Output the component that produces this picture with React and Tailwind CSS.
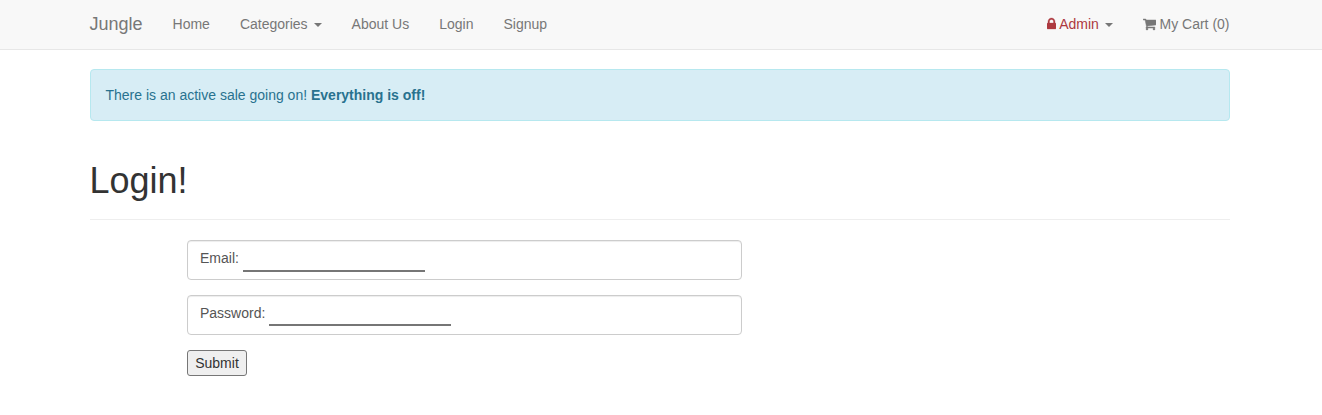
import React from "react";

function Caret() {
  return (
    <span className="ml-[6px] inline-block h-0 w-0 border-x-4 border-t-4 border-x-transparent border-t-[#777] align-middle" />
  );
}

function LockIcon() {
  return (
    <svg className="mt-[3px] h-[14px] w-[9px]" viewBox="0 -1536 1152 1792" fill="currentColor" stroke="currentColor" strokeWidth="40">
      <path
        transform="scale(1 -1)"
        d="M320 768h512v192q0 106-75 181t-181 75-181-75-75-181v-192zm832-96v-576q0-40-28-68t-68-28h-960q-40 0-68 28t-28 68v576q0 40 28 68t68 28h32v192q0 184 132 316t316 132 316-132 132-316v-192h32q40 0 68-28t28-68z"
      />
    </svg>
  );
}

function CartIcon() {
  return (
    <svg className="mt-[3px] h-[14px] w-[13px]" viewBox="0 -1536 1664 1792" fill="currentColor" stroke="currentColor" strokeWidth="60">
      <path
        transform="scale(1 -1)"
        d="M640 0q0-52-38-90t-90-38-90 38-38 90 38 90 90 38 90-38 38-90zm896 0q0-52-38-90t-90-38-90 38-38 90 38 90 90 38 90-38 38-90zm128 1088v-512q0-24-16.5-42.5t-40.5-21.5l-1044-122q13-60 13-70 0-16-24-64h920q26 0 45-19t19-45-19-45-45-19h-1024q-26 0-45 19t-19 45q0 11 8 31.5t16 36 21.5 40 15.5 29.5l-177 823h-204q-26 0-45 19t-19 45 19 45 45 19h256q16 0 28.5-6.5t19.5-15.5 13-24.5 8-26 5.5-29.5 4.5-26h1201q26 0 45-19t19-45z"
      />
    </svg>
  );
}

function Navbar() {
  return (
    <nav className="h-[50px] border-b border-[#e7e7e7] bg-[#f8f8f8] text-[#777]">
      <div className="ml-[74.5px] flex w-[1170px] justify-between">
        <div className="flex">
          <a href="#" className="px-[15px] pt-[14px] text-[18px] leading-5">Jungle</a>
          <a href="#" className="px-[15px] pt-[14px]">Home</a>
          <a href="#" className="px-[15px] pt-[14px]">Categories<Caret /></a>
          <a href="#" className="px-[15px] pt-[14px]">About Us</a>
          <a href="#" className="px-[15px] pt-[14px]">Login</a>
          <a href="#" className="px-[15px] pt-[14px]">Signup</a>
        </div>
        <div className="flex">
          <a href="#" className="flex px-[15px] pt-[14px]">
            <span className="-mr-[0.4px] flex gap-[3.4px] text-[#ad393f]"><LockIcon />Admin</span>
            <span><Caret /></span>
          </a>
          <a href="#" className="flex gap-1 px-[15px] pt-[14px]"><CartIcon />My Cart (0)</a>
        </div>
      </div>
    </nav>
  );
}

function Field({ label, type, inputHeight }) {
  return (
    <label className="mb-[15px] flex h-10 w-[555px] gap-1 rounded-[4px] border border-[#ccc] px-3 pt-[7px] text-[#555] shadow-[inset_0_1px_1px_rgba(0,0,0,0.075)]">
      {label}
      <input type={type} className={`${inputHeight} w-[182px] border-b-2 border-[#767676] outline-none`} />
    </label>
  );
}

export default function App() {
  return (
    <div className="min-h-[415px] bg-white font-['Liberation_Sans',Arial,sans-serif] text-[14px] leading-5 text-[#333]">
      <Navbar />
      <main className="ml-[89.5px] w-[1140px] pt-[19px]">
        <div className="h-[52px] rounded-[4px] border border-[#b6e8ef] bg-[#d7edf5] p-[15px] text-[#28728f]">
          There is an active sale going on! <strong className="font-bold">Everything is off!</strong>
        </div>
        <header className="mt-10 mb-5 h-[59px] border-b border-[#eee]">
          <h1 className="text-[36px] leading-[39.6px] font-medium">Login!</h1>
        </header>
        <form className="ml-[97.5px]">
          <Field label="Email:" type="email" inputHeight="h-6" />
          <Field label="Password:" type="password" inputHeight="h-[23px]" />
          <button type="button" className="h-[26px] w-[60px] rounded-[3px] border border-[#767676] bg-[#efefef]">Submit</button>
        </form>
      </main>
    </div>
  );
}
